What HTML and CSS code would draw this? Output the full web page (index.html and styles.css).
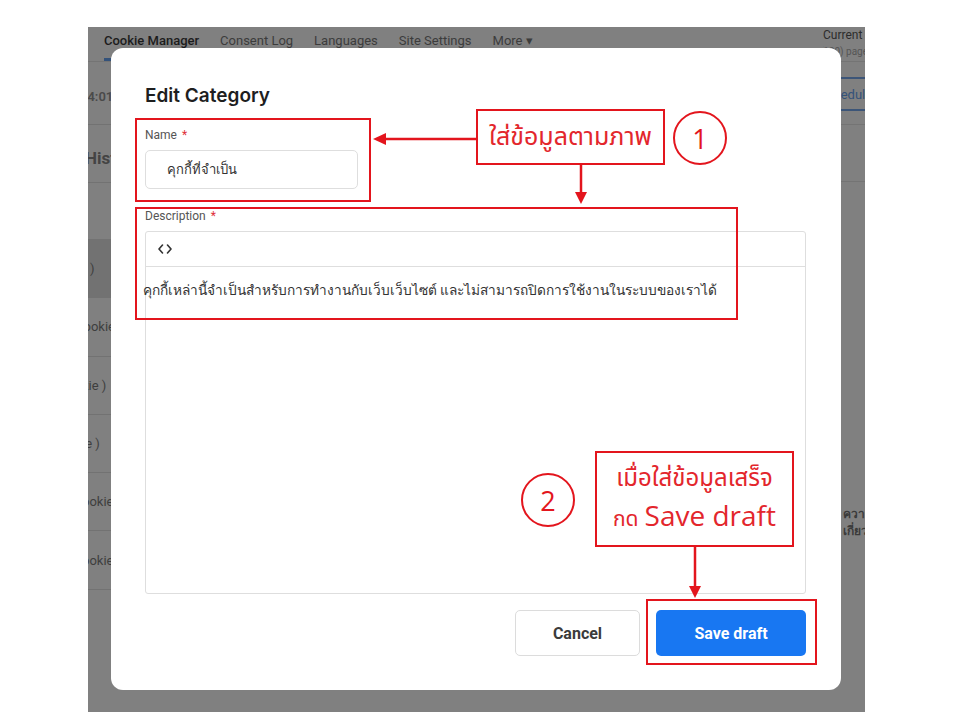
FILE: index.html
```html
<!DOCTYPE html>
<html lang="th">
<head>
<meta charset="utf-8">
<title>Edit Category</title>
<link rel="stylesheet" href="styles.css">
</head>
<body>
<div class="shot">
  <div class="nav">
    <div class="tabs">
      <span class="tab active">Cookie Manager</span>
      <span class="tab">Consent Log</span>
      <span class="tab">Languages</span>
      <span class="tab">Site Settings</span>
      <span class="tab">More ▾</span>
    </div>
    <div class="current">
      <div class="cur-title">Current</div>
      <div class="cur-sub"><span>(100) page</span></div>
    </div>
  </div>
  <div class="app">
    <div class="left">
      <div class="lrow r-time"><span>14:01</span></div>
      <div class="lrow r-head"><span>History</span></div>
      <div class="lrow r-empty"></div>
      <div class="lrow r-dark"><span>)</span></div>
      <div class="lrow r-e"><span>Cookie</span></div>
      <div class="lrow"><span>kie )</span></div>
      <div class="lrow"><span>ie )</span></div>
      <div class="lrow"><span>ookie</span></div>
      <div class="lrow"><span>ookie</span></div>
    </div>
    <div class="mid"></div>
    <div class="right">
      <div class="rbtn"><span>Schedule</span></div>
      <div class="rrow"></div>
      <div class="rtext"><div>ความ</div><div>เกี่ยว</div></div>
    </div>
  </div>
  <div class="modal">
    <h2 class="title">Edit Category</h2>
    <label class="label">Name <span class="req">*</span></label>
    <div class="input">คุกกี้ที่จำเป็น</div>
    <label class="label">Description <span class="req">*</span></label>
    <div class="editor">
      <div class="toolbar">
        <svg class="code-icon" width="14" height="10" viewBox="0 0 14 10" fill="none" stroke="#333" stroke-width="1.6" stroke-linecap="round" stroke-linejoin="round">
          <polyline points="4.5,1 1,5 4.5,9"/>
          <polyline points="9.5,1 13,5 9.5,9"/>
        </svg>
      </div>
      <div class="content">คุกกี้เหล่านี้จำเป็นสำหรับการทำงานกับเว็บเว็บไซต์ และไม่สามารถปิดการใช้งานในระบบของเราได้</div>
    </div>
    <div class="actions">
      <button class="btn cancel">Cancel</button>
      <button class="btn save">Save draft</button>
    </div>
  </div>
</div>

<div class="annot">
  <svg class="arrows" width="960" height="720" viewBox="0 0 960 720">
    <g stroke="#e3151d" stroke-width="2.5" fill="none">
      <line x1="476" y1="139" x2="383" y2="139"/>
      <line x1="581" y1="164" x2="581" y2="194"/>
      <line x1="695" y1="546" x2="695" y2="588"/>
    </g>
    <g fill="#e3151d">
      <polygon points="373,139 386,133 386,145"/>
      <polygon points="581,204 575,192 587,192"/>
      <polygon points="695,598 689,586 701,586"/>
    </g>
  </svg>
  <div class="rbox box-name"></div>
  <div class="rbox box-desc"></div>
  <div class="rbox box-save"></div>
  <div class="rbox note note1">ใส่ข้อมูลตามภาพ</div>
  <div class="rbox note note2">
    <div class="n2a">เมื่อใส่ข้อมูลเสร็จ</div>
    <div class="n2b"><span class="small">กด</span> <span class="big">Save draft</span></div>
  </div>
  <div class="step step1">1</div>
  <div class="step step2">2</div>
</div>
</body>
</html>
```

FILE: styles.css
```css
* { box-sizing: border-box; }
html, body { margin: 0; padding: 0; }
body {
  width: 960px;
  height: 720px;
  background: #ffffff;
  position: relative;
  overflow: hidden;
  font-family: Roboto, "Liberation Sans", sans-serif;
}

/* background screenshot (dimmed) */
.shot {
  margin: 27px 0 0 88px;
  width: 777px;
  height: 685px;
  background: #808080;
  position: relative;
  overflow: hidden;
  display: flex;
  flex-direction: column;
}
.nav {
  height: 35px;
  display: flex;
  justify-content: space-between;
  border-bottom: 1px solid #747474;
  flex: none;
}
.tabs {
  display: flex;
  gap: 21px;
  padding: 6px 0 0 16px;
  font-size: 13px;
  color: #3c3c3c;
}
.tab { height: 28px; line-height: 16px; }
.tab.active {
  color: #1c1c1c;
  font-weight: 500;
  border-bottom: 3px solid #34527a;
}
.current {
  width: 42px;
  padding-top: 1px;
  white-space: nowrap;
  overflow: hidden;
}
.cur-title { font-size: 12px; color: #2c2c2c; line-height: 14px; }
.cur-sub {
  display: flex;
  justify-content: flex-end;
  font-size: 10px;
  color: #555;
  line-height: 14px;
  margin-top: 3px;
  margin-right: -3px;
}

.app { flex: 1; display: flex; }
.left { width: 23px; overflow: hidden; display: flex; flex-direction: column; }
.lrow {
  height: 58.3px;
  border-bottom: 1px solid #727272;
  display: flex;
  align-items: center;
  white-space: nowrap;
  font-size: 13px;
  color: #3e3e3e;
}
.lrow span { margin-left: -6px; }
.r-time { height: 63px; align-items: flex-end; padding-bottom: 20px; font-weight: 600; color: #4a4a4a; }
.r-time span { margin-left: -8px; }
.r-head { height: 58px; font-size: 17px; font-weight: 700; color: #444; padding-top: 8px; }
.r-head span { margin-left: -3px; }
.r-empty { height: 57px; }
.r-dark { background: #727272; }
.r-dark span { margin-left: 2px; }
.r-e span { margin-left: -13px; }
.mid { flex: 1; }
.right { width: 24px; overflow: hidden; display: flex; flex-direction: column; white-space: nowrap; }
.rbtn {
  margin-top: 15px;
  height: 34px;
  border-top: 2px solid #3c5578;
  border-bottom: 2px solid #3c5578;
  display: flex;
  align-items: center;
  font-size: 13px;
  color: #34527a;
}
.rbtn span { margin-left: -22px; }
.rrow { height: 58px; border-top: 1px solid #747474; margin-top: 13px; border-bottom: 1px solid #747474; }
.rtext { margin-top: 324px; font-size: 12px; font-weight: 700; color: #3a3a3a; line-height: 17px; padding-left: 2px; }

/* modal */
.modal {
  position: absolute;
  left: 23px;
  top: 21px;
  width: 730px;
  height: 642px;
  background: #ffffff;
  border-radius: 12px;
  padding: 36px 35px 34px 34px;
  display: flex;
  flex-direction: column;
}
.title {
  margin: 0;
  font-family: Inter, "Open Sans", sans-serif;
  font-size: 19px;
  font-weight: 600;
  color: #1e1e1e;
  line-height: 24px;
}
.label {
  margin-top: 19px;
  font-size: 12px;
  line-height: 16px;
  color: #555;
}
.req { color: #e0303a; margin-left: 2px; }
.input {
  margin-top: 7px;
  width: 213px;
  height: 39px;
  border: 1px solid #dedede;
  border-radius: 5px;
  padding-left: 21px;
  display: flex;
  align-items: center;
  font-size: 13px;
  color: #333;
}
.editor {
  margin-top: 7px;
  height: 363px;
  border: 1px solid #dedede;
  border-radius: 3px;
  display: flex;
  flex-direction: column;
}
.toolbar {
  height: 35px;
  border-bottom: 1px solid #dedede;
  padding-left: 12px;
  display: flex;
  align-items: center;
}
.content {
  padding: 13px 0 0 0;
  margin-left: -3px;
  font-size: 13.7px;
  color: #333;
  line-height: 20px;
}
.actions {
  margin-top: 16px;
  display: flex;
  justify-content: flex-end;
  gap: 16px;
}
.btn {
  height: 46px;
  border-radius: 5px;
  font-family: Roboto, "Liberation Sans", sans-serif;
  font-size: 16px;
  font-weight: 700;
}
.cancel { width: 125px; background: #fff; border: 1px solid #dcdcdc; color: #3b3b3b; }
.save { width: 150px; background: #1877f2; border: none; color: #ffffff; }

/* annotations */
.annot { position: absolute; left: 0; top: 0; width: 960px; height: 720px; }
.arrows { position: absolute; left: 0; top: 0; }
.rbox { position: absolute; border: 2.5px solid #e3151d; }
.box-name { left: 135px; top: 118px; width: 236px; height: 84px; }
.box-desc { left: 135px; top: 207px; width: 603px; height: 113px; }
.box-save { left: 646px; top: 599px; width: 171px; height: 66px; }
.note {
  background: #ffffff;
  color: #e3262c;
  display: flex;
  flex-direction: column;
  align-items: center;
  justify-content: center;
  font-family: "Noto Sans Thai", "Leelawadee UI", Tahoma, sans-serif;
}
.note1 { left: 476px; top: 109px; width: 189px; height: 56px; font-size: 25px; }
.note2 { left: 595px; top: 451px; width: 199px; height: 96px; font-size: 24px; line-height: 36px; }
.n2b { display: flex; align-items: baseline; gap: 6px; }
.small { font-size: 21px; }
.big { font-family: "Open Sans", "Liberation Sans", sans-serif; font-size: 28px; font-weight: 500; }
.step {
  position: absolute;
  width: 54px;
  height: 54px;
  border: 2.5px solid #e3151d;
  border-radius: 50%;
  background: #fff;
  color: #e3151d;
  font-family: "Open Sans", "Liberation Sans", sans-serif;
  font-size: 27px;
  display: flex;
  align-items: center;
  justify-content: center;
}
.step1 { left: 673px; top: 111px; }
.step2 { left: 521px; top: 473px; }
```
